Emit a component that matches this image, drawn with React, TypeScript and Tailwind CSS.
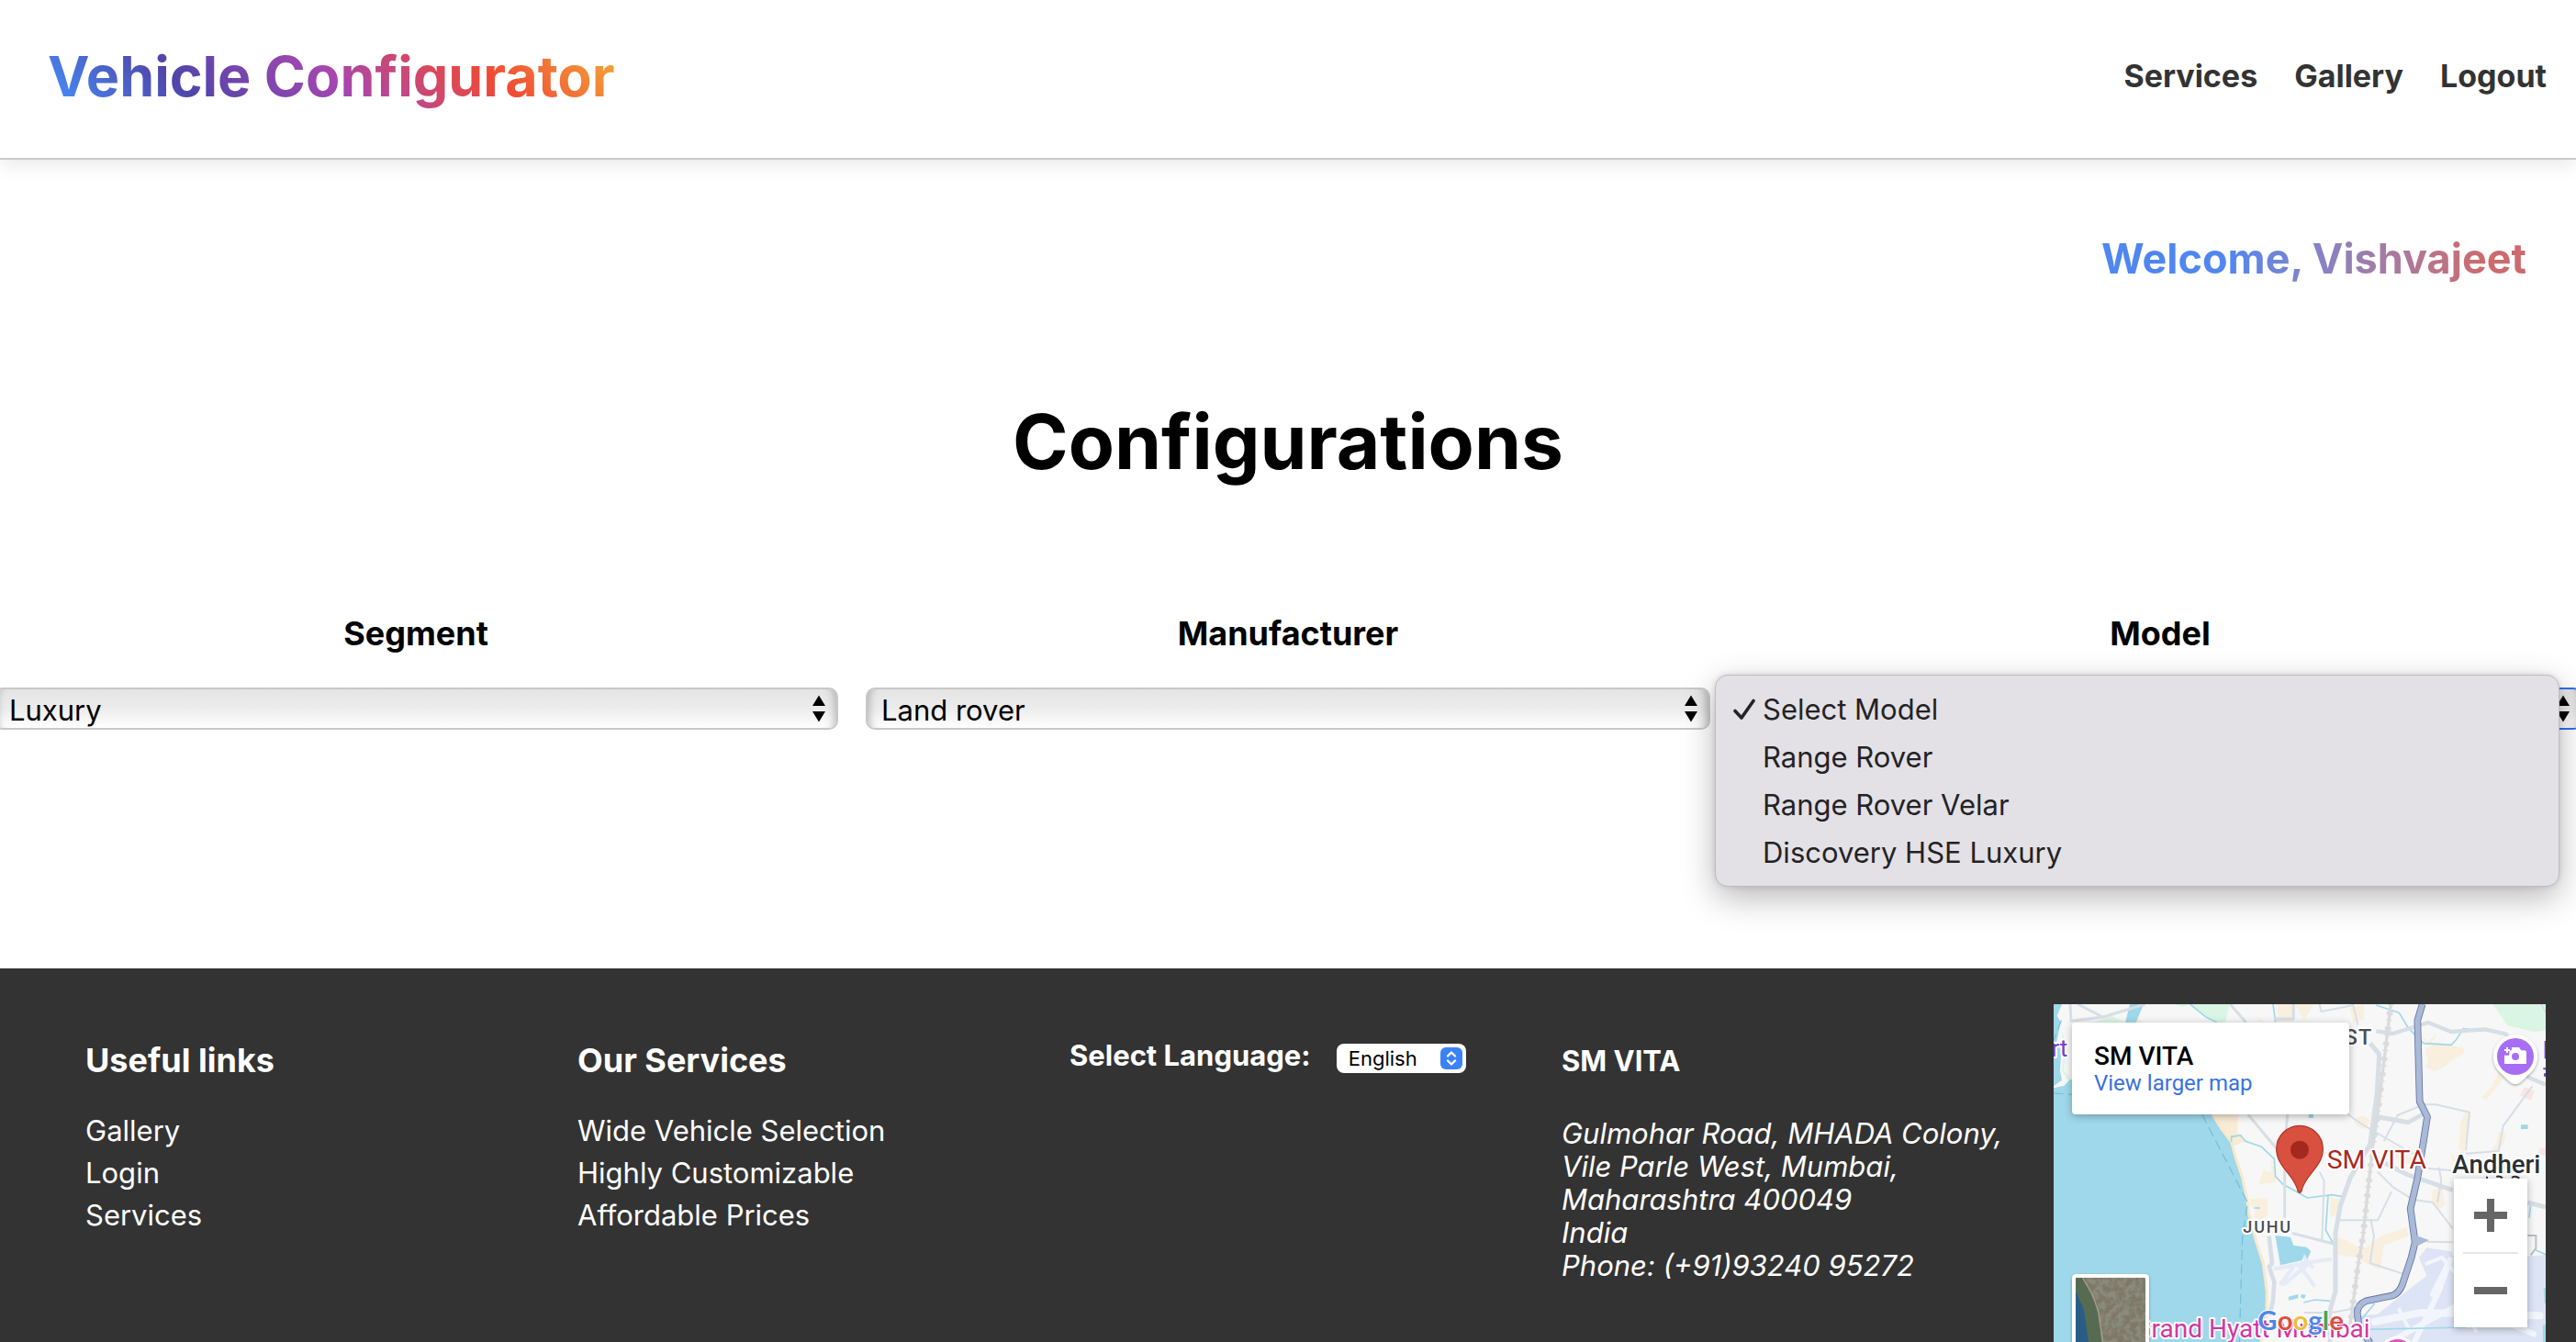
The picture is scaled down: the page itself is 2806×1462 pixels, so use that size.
import { useState } from "react";

const models = ["Select Model", "Range Rover", "Range Rover Velar", "Discovery HSE Luxury"];

function SelectArrows() {
  return (
    <svg
      viewBox="0 0 14 30"
      className="pointer-events-none absolute top-2 right-[14px] h-[30px] w-[14px]"
      aria-hidden="true"
    >
      <path d="M7 0.5 14 12H0Z M0 18H14L7 29.5Z" fill="#000" />
    </svg>
  );
}

function Field({
  id,
  label,
  options,
  focused = false,
}: {
  id: string;
  label: string;
  options: string[];
  focused?: boolean;
}) {
  return (
    <div className="flex flex-col">
      <label htmlFor={id} className="text-center text-[36px] leading-[44px] font-bold text-black">
        {label}
      </label>
      <div className="relative mt-[37px]">
        <select
          id={id}
          className={
            "block h-[46px] w-full appearance-none rounded-[10px] border-2 bg-linear-to-b from-[#e5e5e5] via-[#ececec] to-white px-[15px] text-[31px] text-black shadow-[inset_12px_0_10px_-10px_rgba(0,0,0,0.25),inset_-12px_0_10px_-10px_rgba(0,0,0,0.25)] outline-none " +
            (focused ? "border-[#2f6fee]" : "border-[#c8c8c8]")
          }
        >
          {options.map((o) => (
            <option key={o}>{o}</option>
          ))}
        </select>
        <SelectArrows />
      </div>
    </div>
  );
}

function ModelMenu() {
  const [selected, setSelected] = useState(models[0]);
  return (
    <ul
      role="listbox"
      aria-label="Model"
      className="absolute top-[67px] -left-[25px] z-10 w-full rounded-[14px] border border-[#bdbcc0] bg-[#e3e1e6] pt-[11px] pb-[10px] shadow-[0_12px_36px_rgba(0,0,0,0.28),0_0_6px_rgba(0,0,0,0.12)]"
    >
      {models.map((m) => (
        <li key={m} role="option" aria-selected={m === selected}>
          <button
            type="button"
            onClick={() => setSelected(m)}
            className="flex h-[52px] w-full items-center pl-[19px] text-left text-[31px] text-[#232325]"
          >
            <span className="w-8 shrink-0">
              {m === selected && (
                <svg viewBox="0 0 24 24" className="h-6 w-6" fill="none" aria-hidden="true">
                  <path
                    d="M2 13.5 9 21 22 2.5"
                    stroke="#232325"
                    strokeWidth="3.6"
                    strokeLinecap="round"
                    strokeLinejoin="round"
                  />
                </svg>
              )}
            </span>
            {m}
          </button>
        </li>
      ))}
    </ul>
  );
}

function MapDrawing() {
  return (
    <svg
      viewBox="51 42 1608 1104"
      className="absolute inset-x-0 top-0 w-full"
      fontFamily="Roboto, sans-serif"
      aria-hidden="true"
    >
      <defs>
        <filter id="terrain" x="0" y="0" width="100%" height="100%">
          <feTurbulence type="fractalNoise" baseFrequency="0.05" numOctaves="4" seed="4" />
          <feColorMatrix values="0 0 0 0 0.25  0 0 0 0 0.26  0 0 0 0 0.2  4 0 0 0 -1.6" />
          <feComposite in2="SourceGraphic" operator="in" />
        </filter>
        <filter id="drop" x="-20%" y="-20%" width="140%" height="140%">
          <feDropShadow dx="0" dy="4" stdDeviation="5" floodOpacity="0.35" />
        </filter>
        <clipPath id="thumb">
          <rect x="123" y="936" width="228" height="240" rx="4" />
        </clipPath>
      </defs>
      <rect x="51" y="42" width="1608" height="1104" fill="#f7f7f7" />

      {/* parks */}
      <path
        d="M500 42H625L612 102H585L540 80ZM180 102 240 80 285 102ZM442 42H500L470 50ZM75 42H100L75 110 85 200 78 260 100 290 110 296V42Z"
        fill="#daf5e4"
      />
      <path d="M1486 42H1659V128L1618 132 1535 112Z" fill="#daf5e4" />
      <path d="M85 42H300L180 102H111V290L84 260 92 180 76 120Z" fill="#f7f7f7" />

      {/* built-up areas */}
      <g fill="#f8efdf">
        <path d="M570 402H655L650 460 680 490 640 505 600 450Z" fill="#f8ecd6" />
        <path d="M760 555H776V625L722 630 735 585 762 590Z" />
        <path d="M692 678 750 676V735L728 745 705 738 712 712 692 700Z" />
        <path d="M782 42H835V100H770L785 80ZM712 80 735 95 728 102ZM320 85 345 102H320Z" />
        <path d="M1020 55 1065 42V90L1030 105ZM1240 130 1275 165 1300 140V150L1275 180ZM1265 190 1300 165 1390 185 1395 200 1370 215 1345 230 1330 245 1295 262 1265 245 1275 225Z" />
        <path d="M1505 265 1530 275 1485 330 1465 355 1450 345 1480 315ZM1395 395 1415 400 1405 460 1390 530 1375 510 1380 430Z" />
        <path d="M1030 420 1060 405 1085 420 1070 450 1040 440ZM1160 500 1215 540 1255 545 1240 575 1200 560 1160 540ZM1505 460 1530 462 1522 500 1500 520 1480 525 1500 490Z" />
        <path d="M965 800 1000 810 1060 845 1095 820 1120 800 1205 770 1210 800 1130 830 1118 910 1075 890 1040 870 975 860ZM955 670 985 680 975 730 955 740ZM1290 650 1320 640 1330 700 1305 715 1285 690ZM840 42 900 42 870 95Z" />
        <path d="M1250 470 1275 465 1275 500ZM1350 530 1395 580 1360 580Z" />
      </g>
      <path d="M1590 312 1623 325 1610 357 1575 340ZM1635 515 1659 510V540L1640 530Z" fill="#fae5e5" />

      {/* airport */}
      <path
        d="M1245 870 1270 838 1350 850 1370 890 1520 870 1659 862V1146H1060L1050 1060 1110 1055 1180 1000 1230 960 1270 930Z"
        fill="#dde4f5"
      />
      <g stroke="#f2f5fc" fill="none" strokeLinecap="round">
        <path d="M1100 1080 1250 1050 1640 1060" strokeWidth="24" />
        <path d="M1290 990 1350 870 1310 980 1230 1146M1150 1146 1380 1020 1620 1120" strokeWidth="18" />
        <path d="M1270 890 1320 870 1380 940 1510 1010M1180 1040 1210 1100M1400 1030 1430 1110" strokeWidth="12" />
      </g>
      <path
        d="M770 908 890 885 960 875M850 890 905 965M890 885 800 960M862 860 900 905M790 960 835 900"
        stroke="#e6ebf7"
        strokeWidth="13"
        fill="none"
      />

      {/* sea and lakes */}
      <g fill="#9fd8ea">
        <path d="M51 316 85 308 105 288 540 330 570 402 600 450 632 492 645 540 668 610 683 680 690 730 712 815 736 890 748 985 747 1060 728 1146H51Z" />
        <path d="M51 42H78L62 80 74 100 60 170 76 190 72 260 78 290 51 310Z" />
        <path d="M300 42H345L320 102H285Z" />
        <path d="M775 798 825 803 835 830 878 836 892 850 880 875 870 858 862 880 792 895Z" />
        <path d="M818 998 850 990 850 1003 820 1010ZM860 990 875 992 870 1005 858 1000ZM884 402H900V414H884ZM1578 436H1601V450H1578Z" />
        <path d="M1652 970H1659V1020H1655ZM1650 1090H1659V1146H1650Z" />
      </g>
      <path
        d="M570 402 600 450 632 492 645 540 668 610 683 680 690 730 712 815 736 890 748 985 747 1060 728 1146"
        fill="none"
        stroke="#f9e9c9"
        strokeWidth="9"
      />
      <g fill="none" stroke="#9fd8ea" strokeWidth="5">
        <path d="M632 492 632 475 662 471 678 490 730 508 772 548 776 605 800 630 880 675 960 665 992 670M706 708H726M868 1017 905 1008 955 1012M948 668 940 780 968 830M1105 45 1180 70 1210 120 1260 170 1350 175 1365 160 1390 122 1450 130" />
        <path d="M497 42 550 85 585 102M768 42 776 100M1060 1105 1400 1098M1100 1020 1050 1080M1610 700 1605 740M1625 845 1659 860" />
      </g>
      <path
        d="M536 402 685 690 668 800 658 1146M51 333 111 337M76 95 51 160"
        fill="none"
        stroke="#6fbfde"
        strokeWidth="3.5"
        strokeDasharray="32 16"
      />

      {/* roads */}
      <g fill="none" stroke="#d7dee6" strokeWidth="9" strokeLinejoin="round">
        <path d="M105 42 108 97 212 84 350 42M130 42 212 84M628 42 680 102M770 90H835V42M686 402 778 512M815 402 806 520 806 740M830 790 965 825" />
        <path
          d="M920 42 925 66 1030 45 1045 110M1010 400 1060 435 1240 540M1130 490 1175 405 1260 370 1300 370 1410 395 1398 520M1110 590 1160 640 1225 680 1290 690 1355 775M985 748 1110 748 1155 655M1088 750 1098 800 1085 888 1190 922M1398 530 1505 522 1520 440 1615 310M920 590 935 620 928 812M1230 575 1350 585M1270 818 1355 820M1310 575 1318 620 1305 690M870 1050H960L1040 1035M1645 42 1659 70"
          strokeWidth="6"
        />
        <path d="M755 800 765 890 755 900 772 950 768 1010 756 1060" strokeWidth="14" />
        <path d="M1085 170 1115 205 1108 330 1085 500 1020 610 988 700 972 790 972 980 952 1050 955 1146" strokeWidth="15" />
        <path d="M1105 130 1160 138 1275 102 1350 132 1460 124 1530 140 1600 280 1659 305" strokeWidth="13" />
        <path d="M1110 410 1210 428 1270 395M1090 540 1210 600 1355 650M1600 690 1659 705" strokeWidth="15" />
      </g>
      <g fill="none" stroke="#dadbdd">
        <path d="M1153 42 1110 400 1092 520 1062 800 1045 900 1020 1090" strokeWidth="10" />
        <path
          d="M1153 42 1110 400 1092 520 1062 800 1045 900 1020 1090"
          strokeWidth="20"
          strokeDasharray="4 20 12 14"
        />
      </g>
      <g fill="none" strokeLinejoin="round">
        <path
          d="M1256 42 1240 95 1247 360 1272 410 1258 500 1240 610 1217 710 1232 820 1220 870 1190 960 Q1180 985 1160 994L1072 1012 Q1044 1025 1043 1050 L1048 1090 1085 1150"
          stroke="#6272a8"
          strokeWidth="23"
        />
        <path
          d="M1256 42 1240 95 1247 360 1272 410 1258 500 1240 610 1217 710 1232 820 1220 870 1190 960 Q1180 985 1160 994L1072 1012 Q1044 1025 1043 1050 L1048 1090 1085 1150"
          stroke="#aab9d6"
          strokeWidth="18"
        />
      </g>
      <path d="M1236 798 1278 813 1240 832Z" fill="#aab9d6" />
      <path d="M1600 798H1627V840L1610 862" fill="none" stroke="#b9bfc6" strokeWidth="6" />

      {/* place labels */}
      <g paintOrder="stroke" stroke="#fff" strokeWidth="12" strokeLinejoin="round">
        <text x="97" y="213" fontSize="78" textAnchor="end" fill="#7440cf">
          rt
        </text>
        <text x="1093" y="175" fontSize="70" fontWeight="500" textAnchor="end" fill="#4a4f54" className="tracking-wider">
          WEST
        </text>
        <text x="670" y="790" fontSize="54" fontWeight="500" fill="#4a4f54" className="tracking-widest">
          JUHU
        </text>
        <text x="944" y="578" fontSize="85" fill="#a8291f">
          SM VITA
        </text>
        <text x="1354" y="593" fontSize="83" fontWeight="500" fill="#2b2f33">
          Andheri
        </text>
        <text x="1085" y="1130" fontSize="84" textAnchor="end" fill="#d336a6">
          Grand Hyatt Mumbai
        </text>
      </g>
      <path d="M1655 162H1659V220H1655ZM1651 250H1659V256H1651ZM1653 268H1659V278H1653Z" fill="#7440cf" />
      <path
        d="M1464 608H1470M1498 606Q1508 602 1518 610M1548 609Q1560 601 1573 611"
        fill="none"
        stroke="#2b2f33"
        strokeWidth="6"
      />

      {/* pins */}
      <path
        d="M1560 141A72 72 0 0 1 1612 263L1576 297Q1560 309 1544 297L1508 263A72 72 0 0 1 1560 141Z"
        fill="#fff"
        filter="url(#drop)"
      />
      <circle cx="1560" cy="213" r="60" fill="#a86df5" />
      <path d="M1548 183H1572L1579 193H1590Q1596 193 1596 199V237H1524V209H1540V193H1548Z" fill="#fff" />
      <circle cx="1560" cy="213" r="12" fill="#a86df5" />
      <path d="M1530 183H1536V189H1542V195H1536V201H1530V195H1524V189H1530Z" fill="#fff" />
      <circle cx="1175" cy="1190" r="63" fill="#fff" />
      <circle cx="1175" cy="1190" r="53" fill="#e056be" />
      <path
        d="M855 439A76 76 0 0 1 931 515C931 575 870 600 861 653Q855 663 849 653C840 600 779 575 779 515A76 76 0 0 1 855 439Z"
        fill="#d8503f"
        stroke="#b03024"
        strokeWidth="3.5"
      />
      <circle cx="855" cy="518" r="30" fill="#a3291e" />

      {/* imagery toggle */}
      <rect x="111" y="924" width="252" height="260" rx="14" fill="#fff" filter="url(#drop)" />
      <g clipPath="url(#thumb)">
        <rect x="123" y="936" width="228" height="240" fill="#7f7868" />
        <rect x="150" y="936" width="201" height="240" fill="#000" filter="url(#terrain)" />
        <path d="M123 936H145L172 990 192 1030 208 1146H123Z" fill="#566b52" />
        <path d="M123 980 150 1040 165 1146H123Z" fill="#2a5d85" />
        <path d="M145 936 178 990 198 1050 212 1146" stroke="#a19c90" strokeWidth="4" fill="none" />
      </g>

      <text
        x="718"
        y="1108"
        fontSize="88"
        fontFamily="Lato, sans-serif"
        fontWeight="700"
        paintOrder="stroke"
        stroke="#fff"
        strokeWidth="6"
      >
        <tspan fill="#4f86ec">G</tspan>
        <tspan fill="#dc4f3f">o</tspan>
        <tspan fill="#f0bd3c">o</tspan>
        <tspan fill="#4f86ec">g</tspan>
        <tspan fill="#4ba45a">l</tspan>
        <tspan fill="#dc4f3f">e</tspan>
      </text>
    </svg>
  );
}

function LocationMap() {
  return (
    <div className="relative h-[500px] overflow-hidden bg-[#9fd8ea] font-[Roboto,sans-serif]">
      <MapDrawing />
      <div className="absolute top-5 left-5 h-[100px] w-[302px] rounded-[4px] bg-white pt-[21px] pl-6 shadow-[0_2px_8px_rgba(0,0,0,0.3)]">
        <p className="text-[28px] leading-8 font-medium text-black">SM VITA</p>
        <a href="#map" className="block text-2xl leading-[26px] text-[#3871e0]">
          View larger map
        </a>
      </div>
      <div className="absolute top-[190px] right-5 flex h-[162px] w-20 flex-col items-center bg-white shadow-[0_2px_8px_rgba(0,0,0,0.3)]">
        <button type="button" aria-label="Zoom in" className="flex w-full flex-1 items-center justify-center">
          <svg viewBox="0 0 36 36" className="h-9 w-9" aria-hidden="true">
            <path d="M14 0H22V14H36V22H22V36H14V22H0V14H14Z" fill="#666" />
          </svg>
        </button>
        <div className="h-[2px] w-[60px] bg-[#e6e6e6]" />
        <button type="button" aria-label="Zoom out" className="flex w-full flex-1 items-center justify-center">
          <svg viewBox="0 0 36 8" className="h-2 w-9" aria-hidden="true">
            <path d="M0 0H36V8H0Z" fill="#666" />
          </svg>
        </button>
      </div>
    </div>
  );
}

export default function App() {
  return (
    <div className="flex h-screen flex-col overflow-hidden bg-white font-[Inter,sans-serif] text-black">
      <header className="flex shrink-0 items-center justify-between border-b-2 border-[#cacaca] bg-white pt-[45px] pr-8 pb-[51px] pl-[52px] shadow-[0_4px_20px_rgba(0,0,0,0.1)]">
        <h1 className="bg-[linear-gradient(45deg,#4694ff,#4f45aa,#a646b0,#f04a35,#f4b038)] bg-clip-text text-[61px] leading-[76px] font-bold text-transparent">
          Vehicle Configurator
        </h1>
        <nav className="flex gap-10 text-[34px] leading-10 font-bold text-[#333]">
          <a href="#services">Services</a>
          <a href="#gallery">Gallery</a>
          <a href="#logout">Logout</a>
        </nav>
      </header>

      <main className="shrink-0">
        <div className="mt-20 flex justify-end pr-[54px]">
          <p className="bg-linear-to-r from-[#5086ef] from-30% to-[#cc6a6e] to-90% bg-clip-text text-[45px] leading-[56px] font-bold text-transparent">
            Welcome, Vishvajeet
          </p>
        </div>
        <h2 className="mt-[122px] text-center text-[82px] leading-[100px] font-bold">Configurations</h2>
        <div className="-mx-[7px] mt-[136px] grid grid-cols-3 gap-[30px]">
          <Field id="segment" label="Segment" options={["Luxury"]} />
          <Field id="manufacturer" label="Manufacturer" options={["Land rover"]} />
          <div className="relative">
            <Field id="model" label="Model" options={models} focused />
            <ModelMenu />
          </div>
        </div>
      </main>

      <footer className="mt-[260px] grid shrink-0 grid-cols-5 bg-[#333] pt-[39px] pr-[33px] pb-10 pl-[93px] text-[31px] text-white">
        <section className="pt-[39px]">
          <h3 className="text-[36px] leading-[44px] font-bold">Useful links</h3>
          <ul className="mt-8 leading-[46px]">
            <li><a href="#gallery">Gallery</a></li>
            <li><a href="#login">Login</a></li>
            <li><a href="#services">Services</a></li>
          </ul>
        </section>
        <section className="pt-[39px]">
          <h3 className="text-[36px] leading-[44px] font-bold">Our Services</h3>
          <ul className="mt-8 leading-[46px]">
            <li>Wide Vehicle Selection</li>
            <li>Highly Customizable</li>
            <li>Affordable Prices</li>
          </ul>
        </section>
        <section className="flex items-start gap-7 pt-9">
          <label htmlFor="language" className="leading-10 font-bold">
            Select Language:
          </label>
          <div className="relative mt-[7px]">
            <select
              id="language"
              className="block h-8 w-[141px] appearance-none rounded-[8px] bg-white pl-[13px] text-[22px] text-black"
            >
              <option>English</option>
            </select>
            <svg
              viewBox="0 0 24 24"
              className="pointer-events-none absolute top-1 right-1 h-6 w-6"
              fill="none"
              aria-hidden="true"
            >
              <rect width="24" height="24" rx="6" fill="#3b82f7" />
              <path
                d="M8 9.5 12 5.5 16 9.5M8 14.5 12 18.5 16 14.5"
                stroke="#fff"
                strokeWidth="2.4"
                strokeLinecap="round"
                strokeLinejoin="round"
              />
            </svg>
          </div>
        </section>
        <section className="pt-[42px]">
          <h4 className="leading-10 font-bold">SM VITA</h4>
          <address className="mt-[41px] leading-9 italic">
            Gulmohar Road, MHADA Colony,
            <br />
            Vile Parle West, Mumbai,
            <br />
            Maharashtra 400049
            <br />
            India
            <br />
            Phone: (+91)93240 95272
          </address>
        </section>
        <LocationMap />
      </footer>
    </div>
  );
}
